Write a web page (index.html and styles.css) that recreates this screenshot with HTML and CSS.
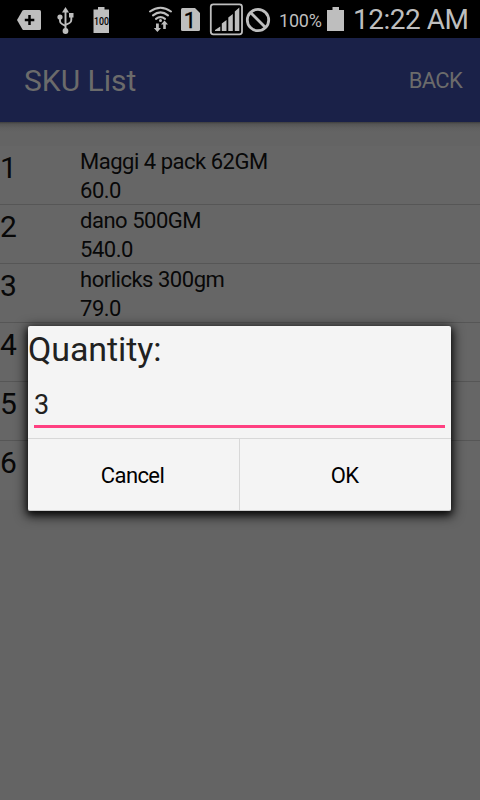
FILE: index.html
```html
<!DOCTYPE html>
<html lang="en">
<head>
<meta charset="utf-8">
<title>SKU List</title>
<link rel="stylesheet" href="styles.css">
</head>
<body>
<div class="screen">
  <div class="status">
    <svg class="icons" width="260" height="38" viewBox="14 0 260 38">
      <g fill="#bebebe">
        <path d="M17 20L22.5 10.5Q23 10 24 10H39.500Q41 10 41 11.500V28.500Q41 30 39.500 30H24Q23 30 22.500 29.500Z"/>
        <path d="M29.500 15V25M24.800 20H34.300" stroke="#000" stroke-width="2.500"/>
        <path d="M65.500 7L69 12.500H62Z"/>
        <circle cx="65.500" cy="31" r="2.900"/>
        <circle cx="60" cy="17" r="2.600"/>
        <rect x="69" y="13" width="4.500" height="4.500"/>
        <path d="M65.500 11V30M60 17V21Q60 23 62 24L65.500 26M71.300 16V20Q71.300 22 69.500 23L65.500 25" fill="none" stroke="#bebebe" stroke-width="1.900"/>
        <path d="M98 7H104.500V9.500H109V33H93.500V9.500H98Z"/>
        <path d="M150 11.500Q160.500 4 171 11.500M153 15.300Q160.500 9.500 168 15.300M156 18.800Q160.500 15.300 165 18.800" fill="none" stroke="#bebebe" stroke-width="2.100" stroke-linecap="round"/>
        <circle cx="160.500" cy="20.500" r="1.500"/>
        <path d="M156 23.500H158.800V28H161L157.400 32L153.800 28H156ZM163.200 29V24.500H161L164.500 20.500L168 24.500H165.800V29Z"/>
        <path d="M182.500 8H195L200 13V29.500Q200 31 198.500 31H182.500Q181 31 181 29.500V9.500Q181 8 182.500 8Z"/>
        <rect x="210.800" y="4.300" width="31.200" height="30" rx="2.500" fill="none" stroke="#bebebe" stroke-width="1.800"/>
        <path d="M215 31V30L220.300 26.500V31ZM221.800 31V23.500L226.500 20V31ZM228.300 31V17.500L232.800 14V31ZM234.800 31V11.500L239.300 7.500V31Z"/>
        <g fill="none" stroke="#bebebe" stroke-width="2.800"><circle cx="258" cy="20" r="10.700"/><path d="M250.500 12.500L265.500 27.500"/></g>
      </g>
      <text class="tiny" x="101.400" y="24.500" text-anchor="middle" textLength="15" lengthAdjust="spacingAndGlyphs">100</text>
      <text class="sim" x="190" y="28" text-anchor="middle">1</text>
    </svg>
    <span class="percent">100%</span>
    <svg class="battery" width="18" height="38" viewBox="0 0 18 38"><path d="M5.500 7H12V10H17V31H0V10H5.500Z" fill="#bebebe"/></svg>
    <span class="clock">12:22 AM</span>
  </div>
  <header class="bar"><h1>SKU List</h1><span class="back">BACK</span></header>
  <main class="content">
    <div class="row"><span class="num">1</span><div class="item"><div>Maggi 4 pack 62GM</div><div>60.0</div></div></div>
    <div class="row"><span class="num">2</span><div class="item"><div>dano 500GM</div><div>540.0</div></div></div>
    <div class="row"><span class="num">3</span><div class="item"><div>horlicks 300gm</div><div>79.0</div></div></div>
    <div class="row"><span class="num">4</span></div>
    <div class="row"><span class="num">5</span></div>
    <div class="row last"><span class="num">6</span></div>
  </main>
  <section class="dialog">
    <h2>Quantity:</h2>
    <div class="field">3</div>
    <div class="actions"><div class="action">Cancel</div><div class="action">OK</div></div>
  </section>
</div>
</body>
</html>
```
FILE: styles.css
```css
* { box-sizing: border-box; }
body { margin: 0; font-family: Roboto, "Liberation Sans", sans-serif; }
.screen { position: relative; width: 480px; height: 800px; background: #646464; overflow: hidden; display: flex; flex-direction: column; }
.status { height: 38px; flex: none; background: #000; color: #bebebe; display: flex; padding-left: 14px; white-space: nowrap; }
.icons { flex: none; }
.tiny { font-size: 10px; font-weight: 500; fill: #000; }
.sim { font-size: 22px; font-weight: 400; fill: #000; stroke: #000; stroke-width: .4px; }
.percent { width: 53px; padding-left: 5px; font-size: 18px; line-height: 41px; letter-spacing: -.2px; }
.battery { flex: none; }
.clock { margin-left: 8px; font-size: 28px; line-height: 40px; letter-spacing: -.5px; }
.bar { height: 84px; flex: none; background: #1a2148; color: #6b6b6b; display: flex; align-items: center; justify-content: space-between; padding: 0 18px 0 24px; }
h1, h2 { margin: 0; font-weight: 400; }
h1 { font-size: 30px; line-height: 84px; padding-top: 1px; }
.back { font-size: 22px; line-height: 84px; padding-top: 1px; letter-spacing: -.7px; }
.content { flex: 1; padding-top: 24px; background: linear-gradient(#3e3e3e, #555 2px, #606060 6px, #646464 10px); }
.row { height: 59px; display: flex; border-bottom: 1px solid #565656; background: #666; color: #080808; }
.last { border-color: transparent; }
.num { width: 80px; font-size: 30px; line-height: 43px; }
.item { font-size: 22px; line-height: 29px; padding-top: 1px; letter-spacing: -.48px; }
.dialog { position: absolute; left: 28px; top: 326px; width: 423px; height: 185px; background: #f4f4f4; border-radius: 2px; border-bottom: 1px solid #ccc; box-shadow: 0 3px 12px 2px rgba(0,0,0,.8), 0 3px 6px rgba(0,0,0,.6); display: flex; flex-direction: column; color: #212121; }
h2 { font-size: 34px; line-height: 46px; height: 48px; letter-spacing: -.1px; }
.field { height: 54px; margin: 0 6px 10px; border-bottom: 3px solid #ff4081; font-size: 27px; line-height: 63px; }
.actions { flex: 1; display: flex; border-top: 1px solid #d8d8d8; color: #000; }
.action { flex: 1; height: 71px; overflow: hidden; text-align: center; font-size: 22px; line-height: 74px; letter-spacing: -.6px; padding-right: 2px; }
.action + .action { border-left: 1px solid #d8d8d8; }
```
